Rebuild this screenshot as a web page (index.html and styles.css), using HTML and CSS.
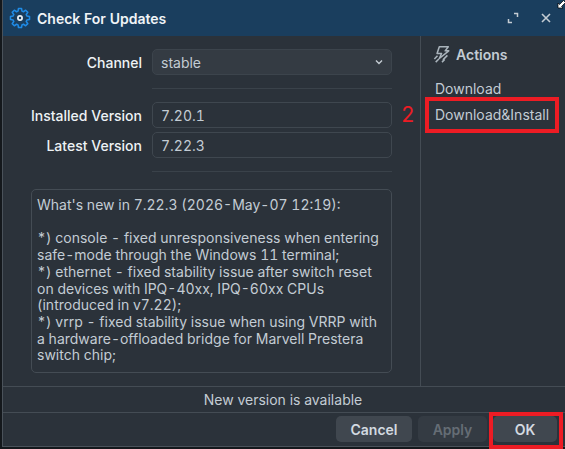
FILE: index.html
```html
<!DOCTYPE html>
<html lang="en">
<head>
<meta charset="utf-8">
<title>Check For Updates</title>
<link rel="stylesheet" href="styles.css">
</head>
<body>
<div class="window">
  <header class="titlebar">
    <svg class="gear" viewBox="0 0 24 24" width="22" height="22" fill="none" stroke="#1f8be6" stroke-width="1.7" stroke-linejoin="round"><path d="M10.36 1.63h3.28l.51 2.87 1.63.68 2.39-1.67 2.32 2.32-1.67 2.39.68 1.63 2.87.51v3.28l-2.87.51-.68 1.63 1.67 2.39-2.32 2.32-2.39-1.67-1.63.68-.51 2.87h-3.28l-.51-2.87-1.63-.68-2.39 1.67-2.32-2.32 1.67-2.39-.68-1.63-2.87-.51v-3.28l2.87-.51.68-1.63-1.67-2.39 2.32-2.32 2.39 1.67 1.63-.68z"/><circle cx="12" cy="12" r="2.3" stroke="#e8f0f6" stroke-width="1.9"/></svg>
    <h1 class="title">Check For Updates</h1>
    <div class="winbtns">
      <svg viewBox="0 0 14 14" width="14" height="14" fill="none" stroke="#c4ccd3" stroke-width="1.5"><path d="M8 2.5h3.5V6M6 11.5H2.5V8"/></svg>
      <svg viewBox="0 0 14 14" width="14" height="14" fill="none" stroke="#c4ccd3" stroke-width="1.6"><path d="M3 3l8 8M11 3l-8 8"/></svg>
    </div>
  </header>
  <div class="body">
    <main class="form">
      <div class="row"><label class="lbl">Channel</label><div class="field select">stable<svg viewBox="0 0 8 6" width="8" height="6" fill="none" stroke="#c4ccd3" stroke-width="1.4"><path d="M1 1.5l3 3 3-3"/></svg></div></div>
      <div class="sep sep-a"></div>
      <div class="row gap"><label class="lbl">Installed Version</label><div class="field">7.20.1</div></div>
      <div class="row"><label class="lbl">Latest Version</label><div class="field">7.22.3</div></div>
      <div class="sep sep-b"></div>
      <div class="notes">What's new in 7.22.3 (2026-May-07 12:19):

*) console - fixed unresponsiveness when entering safe-mode through the Windows 11 terminal;
*) ethernet - fixed stability issue after switch reset on devices with IPQ-40xx, IPQ-60xx CPUs (introduced in v7.22);
*) vrrp - fixed stability issue when using VRRP with a hardware-offloaded bridge for Marvell Prestera switch chip;</div>
    </main>
    <aside class="side">
      <div class="side-head">
        <svg viewBox="0 0 20 20" width="18" height="18" fill="none" stroke="#aab4bc" stroke-width="1.7" stroke-linejoin="round"><path d="M7 2h10l-3.500 4.500H17.500L7 15l2.500-5.500H4.500z"/><path d="M1.500 15.500l3.500-3.500M3 19l3.500-3.500M11 16.500l5-5M10 19l3-3"/></svg>
        <span>Actions</span>
      </div>
      <div class="act">Download</div>
      <div class="act">Download&amp;Install</div>
    </aside>
  </div>
  <div class="status">New version is available</div>
  <footer class="footer">
    <button class="btn cancel">Cancel</button>
    <button class="btn apply">Apply</button>
    <button class="btn ok">OK</button>
  </footer>
  <div class="mark m-install"></div>
  <div class="mark m-ok"></div>
  <span class="two">2</span>
  <svg class="cursor" viewBox="0 0 9 9" width="9" height="9"><path d="M1 8V3l1.500 1.500L6.500 .5l2 2-4 4L6 8z" fill="#fff" stroke="#000" stroke-width=".7"/></svg>
</div>
</body>
</html>
```
FILE: styles.css
```css
* { box-sizing: border-box; }
html, body { margin: 0; height: 100%; background: #14181c; overflow: hidden; }
body { font-family: Inter, "Liberation Sans", sans-serif; font-variant-numeric: tabular-nums; }
.window { position: relative; margin-left: 2px; width: 563px; height: 447px; background: #2b323a; border-left: 1px solid #4a525a; border-bottom: 1px solid #4a525a; display: flex; flex-direction: column; color: #c3ccd4; font-size: 14px; }
.titlebar { height: 36px; flex: none; background: #1a3e5e; display: flex; align-items: center; padding-left: 6px; }
.gear { margin-right: 6px; }
.title { margin: 0; font-size: 14px; font-weight: 600; color: #f0f4f7; }
.winbtns { margin-left: auto; display: flex; gap: 19px; padding-right: 12px; }
.body { height: 351px; flex: none; display: flex; border-bottom: 1px solid #444c54; }
.form { width: 418px; flex: none; border-right: 1px solid #444c54; padding: 13px 28px 13px 28px; display: flex; flex-direction: column; }
.row { display: flex; align-items: center; flex: none; }
.row.gap { margin-bottom: 4px; }
.sep { height: 1px; flex: none; margin-left: 121px; background: #3a424a; }
.sep-a { margin-top: 13px; margin-bottom: 13px; }
.sep-b { margin-top: 13px; margin-bottom: 17px; }
.lbl { width: 111px; text-align: right; font-weight: 500; color: #eef2f5; flex: none; }
.field { margin-left: 10px; flex: 1; height: 26px; border: 1px solid #3f474f; border-radius: 5px; padding: 0 8px 0 9px; display: flex; align-items: center; justify-content: space-between; font-size: 14px; text-indent: -1px; }
.select { background: #343b43; border-color: #3c444c; }
.notes { flex: 1; border: 1px solid #444c54; border-radius: 5px; padding: 7px 6px 5px 5px; font-size: 14px; line-height: 16.7px; white-space: pre-wrap; }
.side { flex: 1; padding: 9px 12px; }
.side-head { display: flex; align-items: center; gap: 5px; font-weight: 600; color: #c3ccd4; height: 18px; margin-bottom: 13px; }
.act { height: 26px; line-height: 26px; font-size: 14px; padding-left: 2px; white-space: nowrap; }
.status { height: 26px; flex: none; border-bottom: 1px solid #444c54; text-align: center; line-height: 25px; padding-right: 2px; }
.footer { flex: 1; display: flex; justify-content: flex-end; align-items: center; gap: 6px; padding: 0 8px 1px 0; }
.btn { height: 26px; border: 0; border-radius: 5px; background: #40474f; color: #d3dae0; font: 600 14px Inter, sans-serif; padding: 0; }
.cancel { width: 76px; }
.apply { width: 69px; background: #343b43; color: #656d75; }
.ok { width: 64px; }
.mark { position: absolute; border: 4px solid #ed1c24; }
.m-install { left: 422px; top: 97px; width: 134px; height: 36px; }
.m-ok { left: 486px; top: 412px; width: 74px; height: 37px; }
.two { position: absolute; left: 398px; top: 102px; color: #ed1c24; font-size: 21px; line-height: 26px; }
.cursor { position: absolute; right: -1px; top: 0; }
```
